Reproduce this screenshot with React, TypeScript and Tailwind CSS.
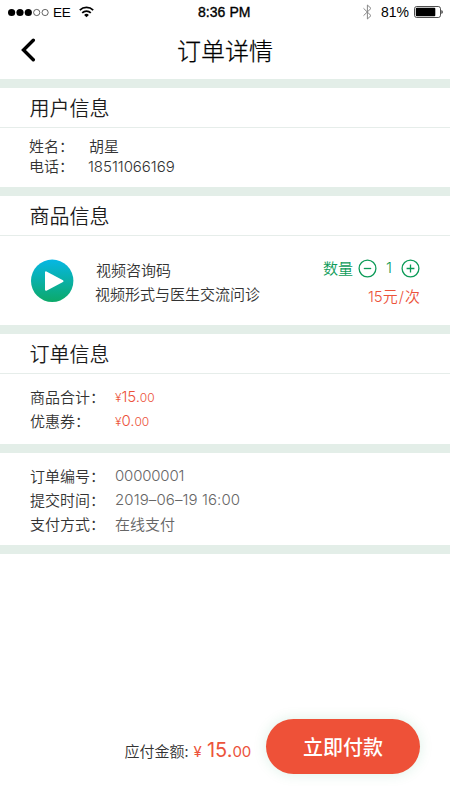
import type { ReactNode } from 'react'

function StatusBar() {
  return (
    <div className="flex h-6 items-center pl-2 pr-[6px] font-['Liberation_Sans','Noto_Sans_CJK_SC',sans-serif] text-[14px] leading-6 text-black">
      <div className="flex w-[190px] items-center">
        <svg width="42" height="9" viewBox="0 0 42 9">
          <circle cx="3.6" cy="4.5" r="3.6" />
          <circle cx="12" cy="4.5" r="3.6" />
          <circle cx="20.3" cy="4.5" r="3.6" />
          <circle cx="28.7" cy="4.5" r="3.1" fill="none" stroke="#222" strokeWidth="0.7" />
          <circle cx="37.1" cy="4.5" r="3.1" fill="none" stroke="#222" strokeWidth="0.7" />
        </svg>
        <span className="ml-[3px] w-[26px] pt-px text-[13.5px] tracking-[-0.3px]">EE</span>
        <svg width="15" height="12" viewBox="0 0 15 12" fill="none" stroke="black" strokeWidth="1.7">
          <path d="M.8 4.1a9.6 9.6 0 0 1 13.4 0M3.2 6.8a6.1 6.1 0 0 1 8.6 0" />
          <path d="M7.5 11.3 5.1 8.9a3.4 3.4 0 0 1 4.8 0z" fill="black" stroke="none" />
        </svg>
      </div>
      <span className="tracking-[0.05px] [-webkit-text-stroke:0.35px_black]">8:36 PM</span>
      <div className="ml-auto flex items-center">
        <svg className="mr-[9px]" width="9" height="16" viewBox="0 0 9 16" fill="none" stroke="#888" strokeWidth="1">
          <path d="M.5 4.3 8 11.6 4.4 15V1L8 4.4.5 11.7" />
        </svg>
        <span className="mr-[5px]">81%</span>
        <svg width="30" height="12" viewBox="0 0 30 12">
          <rect x=".5" y=".5" width="26" height="11" rx="2.2" fill="none" stroke="#222" strokeWidth=".8" />
          <rect x="1.8" y="1.8" width="19.5" height="8.4" rx="1" />
          <path d="M27.5 4a2.3 2.3 0 0 1 0 4z" />
        </svg>
      </div>
    </div>
  )
}

function Divider() {
  return <div className="h-[9px] shrink-0 bg-[#e3eee8]" />
}

function SectionTitle({ children }: { children: ReactNode }) {
  return (
    <h2 className="h-10 border-b border-[#e6edea] pl-[29.5px] text-[20px] leading-[39px] text-[#1c1c1c]">
      {children}
    </h2>
  )
}

function Price({ value, cents }: { value: string; cents: string }) {
  return (
    <span className="font-['Inter','Noto_Sans_CJK_SC',sans-serif] text-[#ec533b]">
      <span className="text-[12px]">¥</span>
      <span className="text-[15px] tracking-[-0.1px]">{value}.</span>
      <span className="text-[12px] tracking-[-0.1px]">{cents}</span>
    </span>
  )
}

function Row({ label, children }: { label: string; children: ReactNode }) {
  return (
    <div className="flex h-6 items-center whitespace-nowrap leading-6">
      <span className="-mt-px w-[85px] text-[#333]">{label}</span>
      {children}
    </div>
  )
}

export default function App() {
  return (
    <div
      lang="zh-CN"
      className="flex h-[800px] w-[450px] flex-col overflow-hidden bg-white font-['Noto_Sans_CJK_SC',sans-serif] text-[15px] font-[350] text-[#333]"
    >
      <StatusBar />
      <header className="flex h-[55px] items-center">
        <svg className="-mt-[3px] ml-[21px]" width="15" height="24" viewBox="0 0 15 24" fill="none" stroke="black" strokeWidth="3.4" strokeLinecap="round">
          <path d="M12.3 2.2 2.5 12l9.8 9.8" />
        </svg>
        <h1 className="-mt-[3px] ml-[141px] text-[24px] font-light leading-[52px] text-black [-webkit-text-stroke:0.25px_black]">订单详情</h1>
      </header>

      <Divider />
      <section className="h-[99px]">
        <SectionTitle>用户信息</SectionTitle>
        <div className="pl-[29px] pt-2 leading-5">
          <div className="flex">
            <span className="w-[60px]">姓名：</span>
            <span>胡星</span>
          </div>
          <div className="flex">
            <span className="w-[59px]">电话：</span>
            <span className="pt-px font-['Inter',sans-serif] font-light tracking-[-0.03px]">18511066169</span>
          </div>
        </div>
      </section>

      <Divider />
      <section className="h-[129px]">
        <SectionTitle>商品信息</SectionTitle>
        <div className="flex h-[89px] items-center pl-[31px] pr-[30px]">
          <svg width="43" height="43" viewBox="0 0 43 43">
            <defs>
              <linearGradient id="play" x1="0" y1="0" x2="0" y2="1">
                <stop offset="0" stopColor="#06b7e4" />
                <stop offset="1" stopColor="#0ca969" />
              </linearGradient>
            </defs>
            <circle cx="21.2" cy="21.8" r="21.2" fill="url(#play)" />
            <path d="M15 13.3v17.5l16.5-8.7z" fill="white" stroke="white" strokeWidth="2" strokeLinejoin="round" />
          </svg>
          <div className="ml-[21px] whitespace-nowrap leading-6">
            <p className="pl-px pt-[3px]">视频咨询码</p>
            <p>视频形式与医生交流问诊</p>
          </div>
          <div className="ml-auto flex flex-col items-end pt-[3px]">
            <div className="flex h-7 items-center text-[#0c9b58]">
              <span className="mr-[5px]">数量</span>
              <svg width="19" height="19" viewBox="0 0 19 19" fill="none" stroke="#0c9b58" strokeWidth="1.3">
                <circle cx="9.5" cy="9.5" r="8.4" />
                <path d="M5.8 9.5h7.4" />
              </svg>
              <span className="w-6 text-center font-['Inter',sans-serif]">1</span>
              <svg width="19" height="19" viewBox="0 0 19 19" fill="none" stroke="#0c9b58" strokeWidth="1.3">
                <circle cx="9.5" cy="9.5" r="8.4" />
                <path d="M5.6 9.5h7.8M9.5 5.6v7.8" />
              </svg>
            </div>
            <p className="h-7 pt-px font-['Inter','Noto_Sans_CJK_SC',sans-serif] leading-7 text-[#ec533b]">
              15元<span className="mx-px">/</span>次
            </p>
          </div>
        </div>
      </section>

      <Divider />
      <section className="h-[110px]">
        <SectionTitle>订单信息</SectionTitle>
        <div className="pl-[30px] pt-[11px]">
          <Row label="商品合计："><Price value="15" cents="00" /></Row>
          <Row label="优惠券："><Price value="0" cents="00" /></Row>
        </div>
      </section>

      <Divider />
      <section className="h-[92px] pl-[30px] pt-[11px] text-[#666]">
        <Row label="订单编号：">
          <span className="font-['Inter',sans-serif] font-light tracking-[-0.2px]">00000001</span>
        </Row>
        <Row label="提交时间：">
          <span className="font-['Inter',sans-serif] font-light tracking-[0.1px]">2019–06–19 16:00</span>
        </Row>
        <Row label="支付方式：">
          <span className="-mt-px">在线支付</span>
        </Row>
      </section>
      <Divider />

      <footer className="mt-auto mb-[26px] flex h-[55px] items-center justify-end pr-[30px]">
        <span className="pt-[9px]">应付金额:</span>
        <span className="ml-[5px] whitespace-nowrap pt-[7px] font-['Inter','Noto_Sans_CJK_SC',sans-serif] font-normal text-[#ec533b]">
          <span className="mr-px text-[15px]">¥ </span>
          <span className="text-[20px]">15.</span>
          <span className="text-[15px] tracking-[-0.2px]">00</span>
        </span>
        <button className="ml-[15px] h-[55px] w-[154px] rounded-full bg-[#ee5138] pt-px text-[20px] font-medium text-white shadow-[0_0_14px_rgba(12,155,88,0.14)]">
          立即付款
        </button>
      </footer>
    </div>
  )
}
